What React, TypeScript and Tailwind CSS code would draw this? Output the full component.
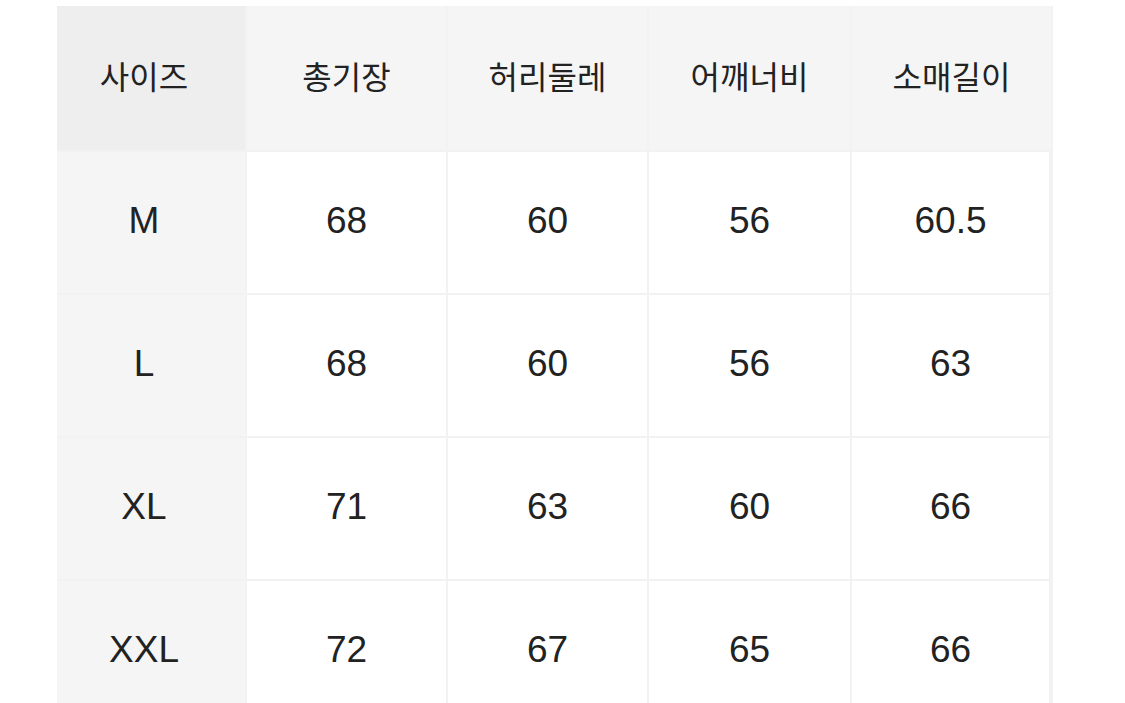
const headers = ["사이즈", "총기장", "허리둘레", "어깨너비", "소매길이"];

const rows = [
  ["M", "68", "60", "56", "60.5"],
  ["L", "68", "60", "56", "63"],
  ["XL", "71", "63", "60", "66"],
  ["XXL", "72", "67", "65", "66"],
];

export default function App() {
  return (
    <div
      className="h-[703px] overflow-hidden bg-white pt-[6px] pl-[57px] text-[#222222]"
      style={{ fontFamily: '"Liberation Sans", "Noto Sans CJK KR", sans-serif' }}
    >
      <div className="grid w-[996px] grid-cols-[188px_199px_199px_201px_199px] grid-rows-[144px_141px_141px_141px_141px] gap-[2px] bg-[#f2f2f2]">
        {headers.map((h, i) => (
          <div
            key={h}
            className={`flex items-center justify-center text-[32px] ${
              i === 0 ? "bg-[#eeeeee] pr-[14px]" : "bg-[#f5f5f5]"
            }`}
          >
            {h}
          </div>
        ))}
        {rows.map((r) =>
          r.map((v, i) => (
            <div
              key={r[0] + i}
              className={`flex items-center justify-center pb-[4px] text-[37px] ${
                i === 0 ? "bg-[#f5f5f5] pr-[14px]" : "bg-white"
              } ${i === 4 ? "border-r-2 border-[#f2f2f2]" : ""}`}
            >
              {v}
            </div>
          ))
        )}
      </div>
    </div>
  );
}
